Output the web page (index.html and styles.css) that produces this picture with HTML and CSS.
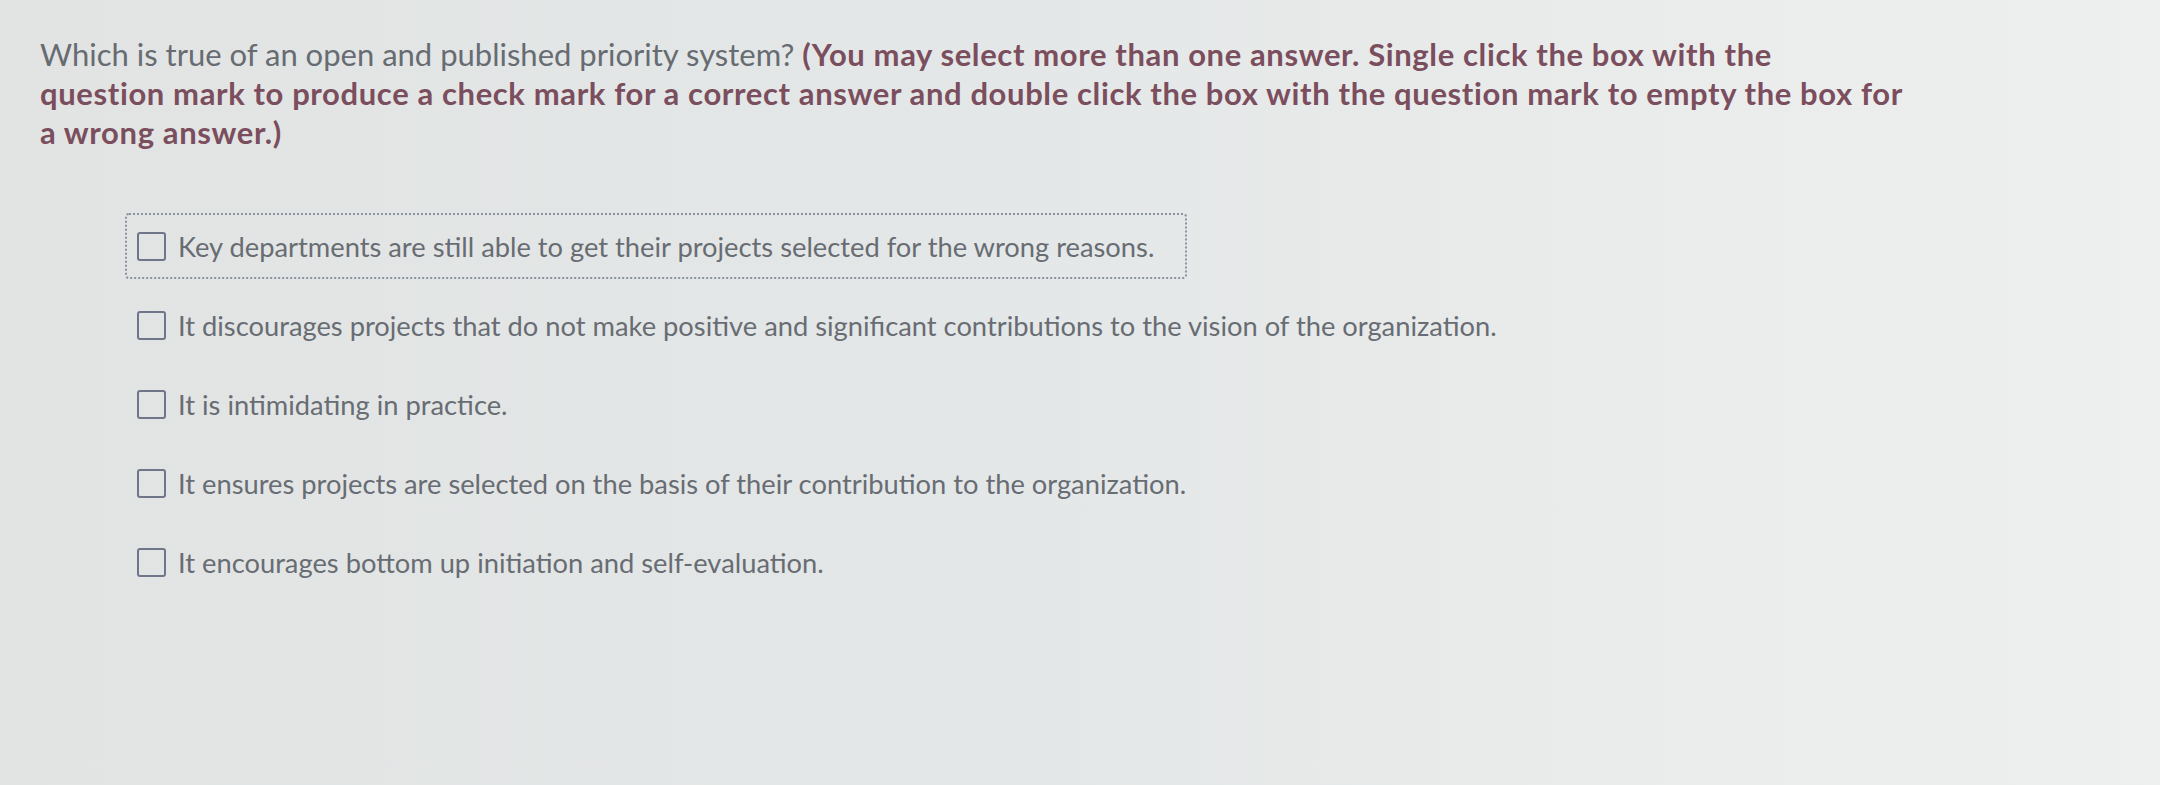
FILE: index.html
```html
<!DOCTYPE html>
<html lang="en">
<head>
<meta charset="utf-8">
<title>Question</title>
<link rel="stylesheet" href="styles.css">
</head>
<body>
<main class="page">
  <p class="prompt">Which is true of an open and published priority system? <strong class="hint">(You may select more than one answer. Single click the box with the<br>question mark to produce a check mark for a correct answer and double click the box with the question mark to empty the box for<br>a wrong answer.)</strong></p>
  <ul class="options">
    <li class="option focused"><span class="box"></span><span class="label">Key departments are still able to get their projects selected for the wrong reasons.</span></li>
    <li class="option"><span class="box"></span><span class="label">It discourages projects that do not make positive and significant contributions to the vision of the organization.</span></li>
    <li class="option"><span class="box"></span><span class="label">It is intimidating in practice.</span></li>
    <li class="option"><span class="box"></span><span class="label">It ensures projects are selected on the basis of their contribution to the organization.</span></li>
    <li class="option"><span class="box"></span><span class="label">It encourages bottom up initiation and self-evaluation.</span></li>
  </ul>
</main>
</body>
</html>
```
FILE: styles.css
```css
html, body {
  margin: 0;
  padding: 0;
  height: 100%;
}
body {
  background: linear-gradient(90deg, #e1e4e3 0%, #e4e7e7 45%, #e8ebea 70%, #eef0ef 100%);
  font-family: "Lato", "Liberation Sans", sans-serif;
  overflow: hidden;
}
.page {
  padding: 35px 0 0 40px;
}
.prompt {
  margin: 0;
  width: 2000px;
  font-size: 31px;
  line-height: 39px;
  color: #676b72;
}
.hint {
  font-weight: 700;
  letter-spacing: 0.62px;
  color: #7b4e5e;
}
.options {
  list-style: none;
  margin: 61px 0 0 85px;
  padding: 0;
  display: flex;
  flex-direction: column;
  align-items: flex-start;
  gap: 13px;
}
.option {
  display: flex;
  align-items: center;
  gap: 12px;
  height: 62px;
  padding: 0 31px 0 10px;
  border: 2px dotted transparent;
  border-radius: 4px;
  font-size: 27.3px;
  color: #686c73;
}
.option.focused {
  border-color: #8a92a3;
}
.box {
  width: 25px;
  height: 25px;
  border: 2.5px solid #6f7689;
  border-radius: 3px;
  flex: none;
}
```
